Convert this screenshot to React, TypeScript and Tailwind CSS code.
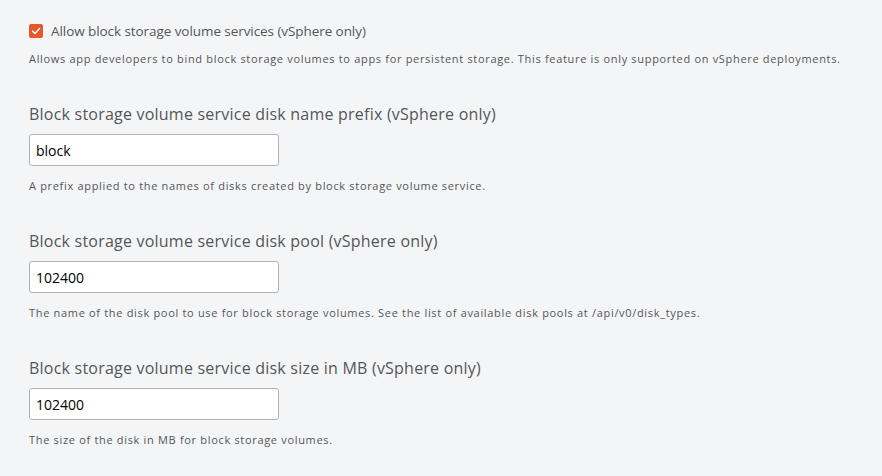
import React from 'react';

const fields = [
    {
        label: 'Block storage volume service disk name prefix (vSphere only)',
        value: 'block',
        help: 'A prefix applied to the names of disks created by block storage volume service.',
    },
    {
        label: 'Block storage volume service disk pool (vSphere only)',
        value: '102400',
        help: 'The name of the disk pool to use for block storage volumes. See the list of available disk pools at /api/v0/disk_types.',
    },
    {
        label: 'Block storage volume service disk size in MB (vSphere only)',
        value: '102400',
        help: 'The size of the disk in MB for block storage volumes.',
    },
];

export default function App() {
    return (
        <div
            className="min-h-[476px] bg-[#f4f5f7] pl-[29px] pt-[19px] text-[#565656]"
            style={{ fontFamily: '"Open Sans", sans-serif' }}
        >
            {/* Checkbox */}
            <label className="flex h-6 items-center gap-2">
                <span className="flex h-[14px] w-[14px] items-center justify-center rounded-[2px] bg-[#e8572a]">
                    <svg viewBox="0 0 12 12" className="h-[10px] w-[10px]" fill="none">
                        <path d="M2 6.2 L4.8 9 L10 3.2" stroke="white" strokeWidth="1.8" strokeLinecap="round" strokeLinejoin="round" />
                    </svg>
                </span>
                <span className="text-[13.5px] tracking-[-0.07px]">Allow block storage volume services (vSphere only)</span>
            </label>
            <p className="mt-2 text-[11px] leading-4 tracking-[0.68px]">
                Allows app developers to bind block storage volumes to apps for persistent storage. This feature is only supported on vSphere deployments.
            </p>

            {fields.map((f) => (
                <div key={f.label} className="mt-[35px]">
                    <div className="text-[16px] leading-6 tracking-[0.22px]">{f.label}</div>
                    <input
                        readOnly
                        value={f.value}
                        className="mt-2 block h-[32px] w-[250px] rounded-[3px] border border-[#b3b3b3] bg-white px-[6px] text-[14px] text-black outline-none"
                    />
                    <p className="mt-3 text-[11px] leading-4 tracking-[0.68px]">{f.help}</p>
                </div>
            ))}
        </div>
    );
}
